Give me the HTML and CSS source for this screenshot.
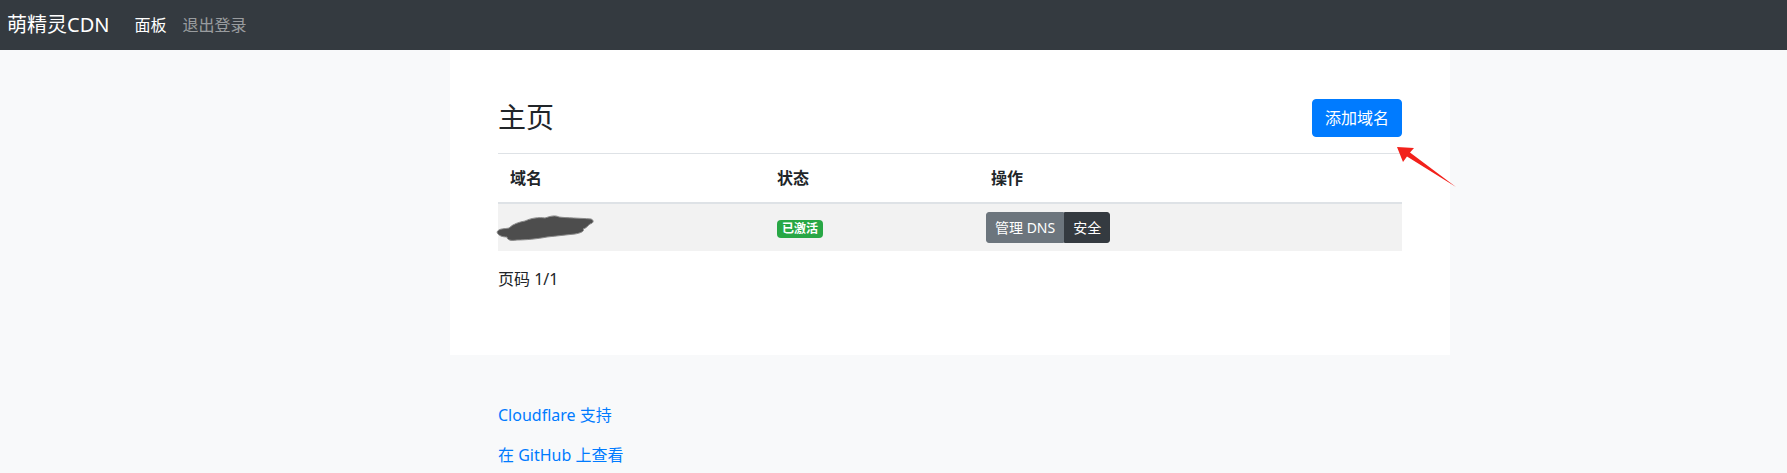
FILE: index.html
```html
<!DOCTYPE html>
<html lang="zh-CN">
<head>
<meta charset="utf-8">
<title>萌精灵CDN</title>
<link rel="stylesheet" href="styles.css">
</head>
<body>
<nav class="navbar">
  <a class="brand" href="#">萌精灵CDN</a>
  <a class="nav-link active" href="#">面板</a>
  <a class="nav-link" href="#">退出登录</a>
</nav>
<main class="main">
  <section class="card">
    <div class="head-row">
      <h3 class="title">主页</h3>
      <button class="btn btn-primary">添加域名</button>
      <svg class="arrow" width="80" height="60" viewBox="0 0 80 60"><polygon points="7,7 24,8 20,12.5 66,47 17,16.5 13,22" fill="#f2211b"/></svg>
    </div>
    <table class="table">
      <thead>
        <tr><th class="c1">域名</th><th class="c2">状态</th><th class="c3">操作</th></tr>
      </thead>
      <tbody>
        <tr>
          <td class="c1"><svg class="blob" width="100" height="32" viewBox="0 0 100 32"><path d="M2,19 C4,15 10,16 14,15 C18,11 24,9 30,8 C36,5 44,4 50,5 C56,3 60,2 64,4 C72,5 84,5 96,6 C99,7 99,10 95,11 C92,13 92,15 88,16 C90,18 86,20 80,21 C70,22 62,23 52,24 C42,26 30,27 22,27 C16,28 12,27 12,24 C8,24 3,23 2,19 Z" fill="#4d4d4d" stroke="#8a8a8a" stroke-width="1"/></svg></td>
          <td class="c2"><span class="badge">已激活</span></td>
          <td class="c3 ops"><span class="btn-group"><button class="btn-sm btn-secondary">管理 DNS</button><button class="btn-sm btn-dark">安全</button></span></td>
        </tr>
      </tbody>
    </table>
    <p class="pager">页码 1/1</p>
  </section>
  <footer class="footer">
    <a class="flink" href="#">Cloudflare 支持</a>
    <a class="flink" href="#">在 GitHub 上查看</a>
  </footer>
</main>
</body>
</html>
```
FILE: styles.css
```css
* { box-sizing: border-box; }
html, body { margin: 0; padding: 0; }
body {
  background: #f8f9fa;
  color: #212529;
  font-family: "Noto Sans", "Noto Sans CJK SC", sans-serif;
  font-size: 16px;
  line-height: 1.5;
}
.navbar {
  height: 50px;
  background: #343a40;
  display: flex;
  align-items: center;
  padding: 0 7px;
}
.brand {
  color: #fff;
  font-size: 20px;
  line-height: 30px;
  text-decoration: none;
  margin-right: 17px;
}
.nav-link {
  color: rgba(255,255,255,.5);
  text-decoration: none;
  padding: 0 8px;
  line-height: 24px;
}
.nav-link.active { color: #fff; }
.main {
  width: 1000px;
  margin-left: 450px;
}
.card {
  background: #fff;
  padding: 49px 48px 48px;
}
.head-row {
  position: relative;
  display: flex;
  justify-content: space-between;
  align-items: center;
  height: 38px;
  margin-bottom: 16px;
}
.title {
  margin: 0;
  font-size: 28px;
  font-weight: 400;
  line-height: 1.2;
}
.btn {
  font: inherit;
  border: 1px solid transparent;
  border-radius: 4px;
  padding: 6px 12px;
  line-height: 24px;
  cursor: pointer;
}
.btn-primary { background: #007bff; border-color: #007bff; color: #fff; }
.arrow {
  position: absolute;
  left: 892px;
  top: 41px;
}
.table {
  width: 100%;
  border-collapse: collapse;
  margin-bottom: 16px;
}
.table th {
  text-align: left;
  font-weight: 700;
  padding: 12px;
  border-top: 1px solid #dee2e6;
  border-bottom: 2px solid #dee2e6;
}
.table td {
  height: 48px;
  padding: 0 12px;
  vertical-align: middle;
  background: #f2f2f2;
}
.c1 { width: 267px; }
.c2 { width: 214px; }
.table td.c1 { padding-left: 0; }
.table td.ops { padding-left: 7px; }
.blob { display: block; margin: 2px 0 0 -3px; }
.badge {
  display: inline-block;
  background: #28a745;
  color: #fff;
  font-size: 12px;
  font-weight: 700;
  line-height: 1;
  padding: 3px 5px;
  border-radius: 4px;
  vertical-align: middle;
}
.btn-group { display: inline-flex; vertical-align: middle; }
.btn-sm {
  font: inherit;
  font-size: 14px;
  line-height: 21px;
  padding: 4px 8px;
  border: 1px solid transparent;
  color: #fff;
}
.btn-secondary { background: #6c757d; border-color: #6c757d; border-radius: 3px 0 0 3px; }
.btn-dark { background: #343a40; border-color: #343a40; border-radius: 0 3px 3px 0; }
.pager { margin: 0 0 16px; }
.footer {
  padding: 48px 48px 0;
  display: flex;
  flex-direction: column;
  align-items: flex-start;
  gap: 16px;
}
.flink { color: #007bff; text-decoration: none; line-height: 24px; }
```
